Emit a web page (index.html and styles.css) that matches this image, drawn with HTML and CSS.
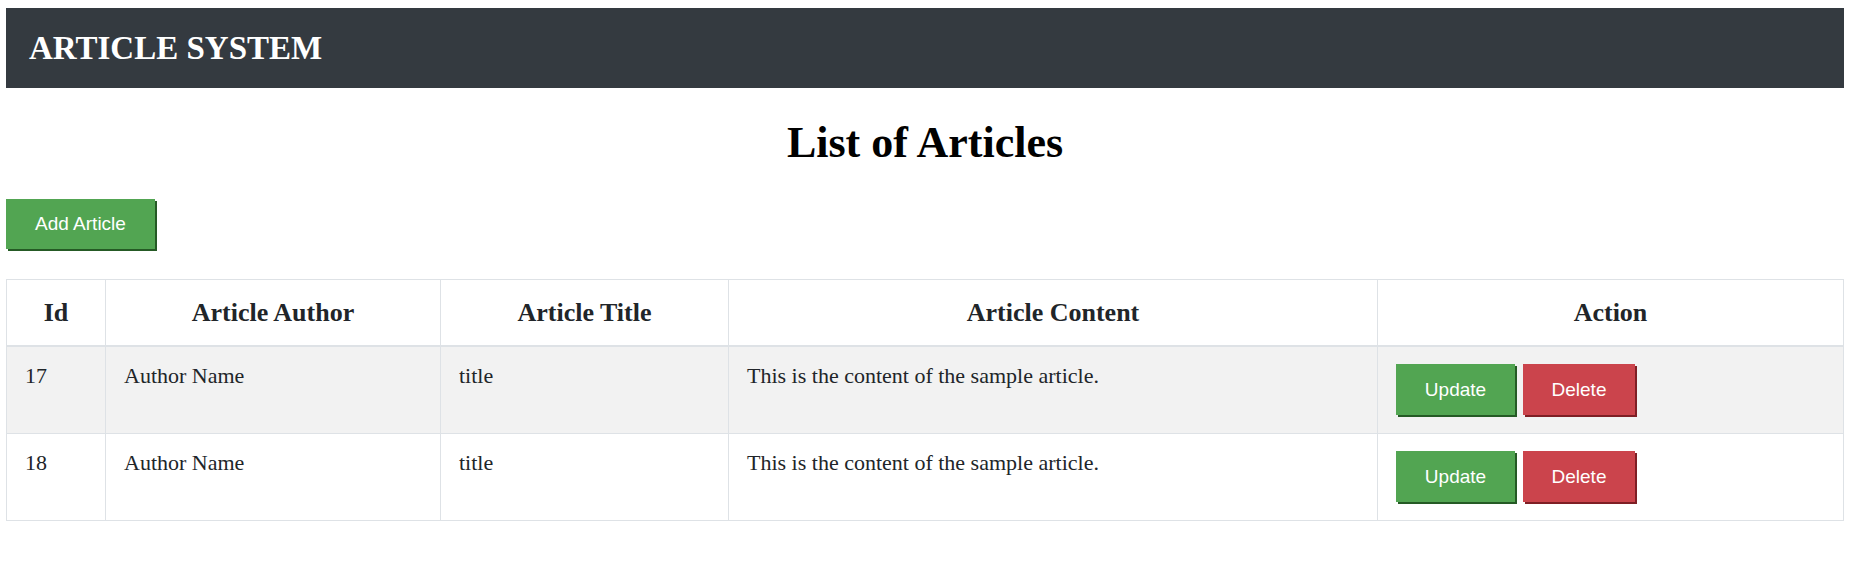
FILE: index.html
```html
<!DOCTYPE html>
<html>
<head>
<meta charset="utf-8">
<link rel="stylesheet" href="styles.css">
</head>
<body>
<header class="topbar"><span class="brand">ARTICLE SYSTEM</span></header>
<h1 class="page-title">List of Articles</h1>
<div class="toolbar"><button class="btn btn-green">Add Article</button></div>
<table class="articles">
  <colgroup>
    <col class="c-id"><col class="c-author"><col class="c-title"><col class="c-content"><col class="c-action">
  </colgroup>
  <thead>
    <tr><th>Id</th><th>Article Author</th><th>Article Title</th><th>Article Content</th><th>Action</th></tr>
  </thead>
  <tbody>
    <tr class="striped">
      <td>17</td><td>Author Name</td><td>title</td><td>This is the content of the sample article.</td>
      <td><div class="actions"><button class="btn btn-green">Update</button><button class="btn btn-red">Delete</button></div></td>
    </tr>
    <tr>
      <td>18</td><td>Author Name</td><td>title</td><td>This is the content of the sample article.</td>
      <td><div class="actions"><button class="btn btn-green">Update</button><button class="btn btn-red">Delete</button></div></td>
    </tr>
  </tbody>
</table>
</body>
</html>
```
FILE: styles.css
```css
html, body { background: #fff; }
body {
  margin: 8px 11px 0 6px;
  font-family: "Liberation Serif", "Times New Roman", serif;
  color: #212529;
}
.topbar {
  height: 80px;
  background: #343a40;
  display: flex;
  align-items: center;
  padding-left: 23px;
}
.brand {
  color: #fff;
  font-weight: bold;
  font-size: 33px;
}
.page-title {
  margin: 0;
  padding-top: 31px;
  height: 78px;
  box-sizing: border-box;
  text-align: center;
  font-size: 44px;
  font-weight: bold;
  color: #000;
  line-height: 47px;
}
.toolbar {
  padding-top: 33px;
  height: 113px;
  box-sizing: border-box;
}
.btn {
  font-family: "Liberation Sans", Arial, sans-serif;
  font-size: 19px;
  color: #fff;
  border: none;
  padding: 0;
  height: 51px;
  cursor: pointer;
}
.toolbar .btn { height: 50px; width: 149px; }
.btn-green { background: #52a552; box-shadow: 2px 2px 0 #255a25; }
.btn-red { background: #cb444c; box-shadow: 2px 2px 0 #7e1f25; }
.actions { display: flex; gap: 8px; }
.actions .btn-green { width: 119px; }
.actions .btn-red { width: 112px; }
.articles {
  width: 100%;
  border-collapse: collapse;
  border: 1px solid #dee2e6;
  table-layout: fixed;
}
.c-id { width: 99px; }
.c-author { width: 335px; }
.c-title { width: 288px; }
.c-content { width: 649px; }
.articles th, .articles td {
  border: 1px solid #dee2e6;
  padding: 17px 18px 18px;
}
.articles th {
  font-size: 26px;
  font-weight: bold;
  text-align: center;
  line-height: 30px;
  padding-top: 18px;
  padding-bottom: 17px;
  border-bottom: 2px solid #dee2e6;
  vertical-align: middle;
}
.articles td {
  font-size: 22px;
  vertical-align: top;
  line-height: 25px;
}
.articles td:not(:last-child) { padding-top: 16px; }
.striped td { background: #f2f2f2; }
```
